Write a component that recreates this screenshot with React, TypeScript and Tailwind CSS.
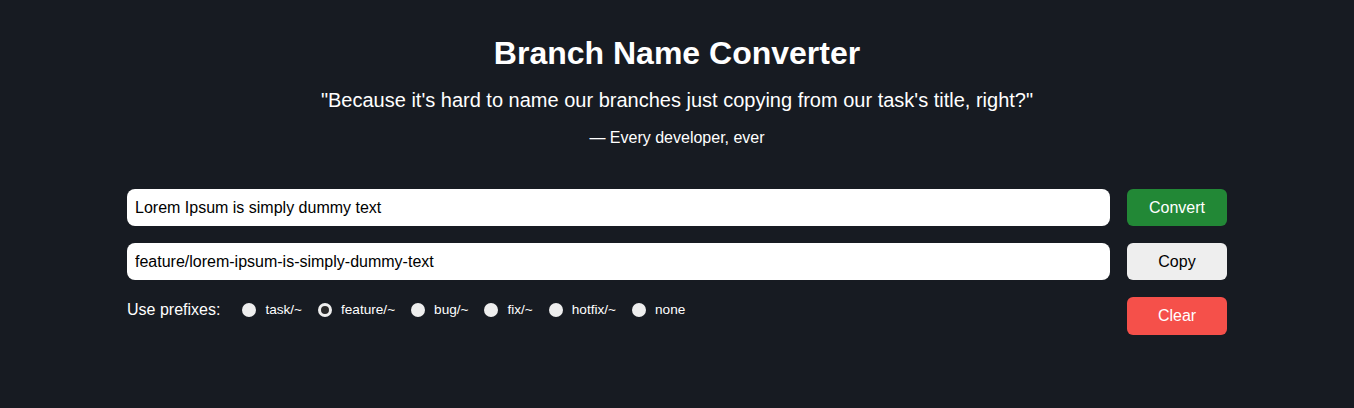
import React, { useState } from "react";

const prefixes = ["task/~", "feature/~", "bug/~", "fix/~", "hotfix/~", "none"];

export default function App() {
  const [sel, setSel] = useState("feature/~");
  return (
    <div className="min-h-[408px] w-full bg-[#171b22] text-white font-['Liberation_Sans',Arial,sans-serif]">
      <div className="flex flex-col items-center pt-[34px]">
        <h1 className="text-[32px] font-bold leading-[38px]">Branch Name Converter</h1>
        <p className="mt-[16px] text-[20px] leading-[24px]">
          "Because it's hard to name our branches just copying from our task's title, right?"
        </p>
        <p className="mt-[16px] text-[16px] leading-[20px]">— Every developer, ever</p>
      </div>
      <div className="mx-auto mt-[41px] flex w-[1100px] gap-[17px]">
        <div className="flex flex-1 flex-col gap-[17px]">
          <input
            className="h-[37px] w-full rounded-[8px] bg-white px-[8px] text-[16px] text-black outline-none"
            defaultValue="Lorem Ipsum is simply dummy text"
          />
          <input
            className="h-[37px] w-full rounded-[8px] bg-white px-[8px] text-[16px] text-black outline-none"
            defaultValue="feature/lorem-ipsum-is-simply-dummy-text"
            readOnly
          />
          <div className="flex items-center pt-[1px]">
            <span className="mr-[22px] text-[16px]">Use prefixes:</span>
            <div className="flex items-center gap-[16px]">
              {prefixes.map((p) => (
                <label key={p} className="flex cursor-pointer items-center gap-[9px] text-[13.6px]" onClick={() => setSel(p)}>
                  {sel === p ? (
                    <span className="h-[14px] w-[14px] rounded-full border-[3px] border-[#eeeeee] bg-[#2a2a2a]" />
                  ) : (
                    <span className="h-[14px] w-[14px] rounded-full bg-[#eeeeee]" />
                  )}
                  <span>{p}</span>
                </label>
              ))}
            </div>
          </div>
        </div>
        <div className="flex w-[100px] flex-col gap-[17px]">
          <button className="h-[37px] rounded-[6px] bg-[#228836] text-[16px] text-white">Convert</button>
          <button className="h-[37px] rounded-[6px] bg-[#eeeeee] text-[16px] text-black">Copy</button>
          <button className="h-[38px] rounded-[6px] bg-[#f5504a] text-[16px] text-white">Clear</button>
        </div>
      </div>
    </div>
  );
}
